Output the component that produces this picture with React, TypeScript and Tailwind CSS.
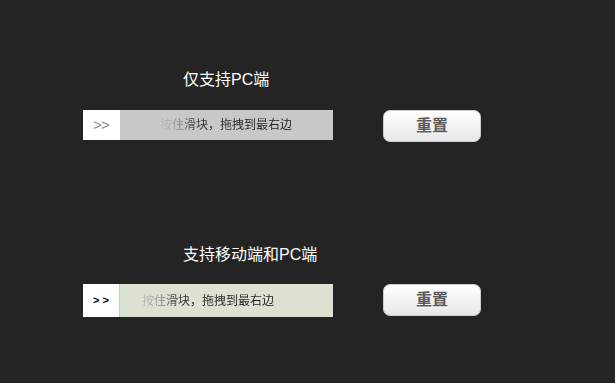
const font = { fontFamily: '"Liberation Sans", "Noto Sans CJK SC", sans-serif' };

function Slider({ bg, handle, textStart, height, border }: { bg: string; handle: React.ReactNode; textStart: string; height: string; border: string }) {
  return (
    <div className={`flex w-[250px] ${height} ${bg}`}>
      <div className={`flex w-[37px] items-center justify-center border-r bg-white ${border}`}>{handle}</div>
      <div className={`flex flex-1 items-center ${textStart}`}>
        <span
          className="bg-clip-text text-[12px] text-transparent"
          style={{ backgroundImage: 'linear-gradient(90deg, #bdbdbd 0px, #a8a8a8 12px, #555 30px, #2a2a2a 44px, #222 100%)' }}
        >
          按住滑块，拖拽到最右边
        </span>
      </div>
    </div>
  );
}

function ResetButton() {
  return (
    <button className="flex h-[32px] w-[98px] items-center justify-center rounded-[7px] border border-[#cfcfcf] bg-gradient-to-b from-white to-[#e6e6e6] text-[16px] font-bold text-[#5a5a5a] [text-shadow:0_1px_0_#fff]">
      重置
    </button>
  );
}

export default function App() {
  return (
    <div className="h-[383px] w-[615px] bg-[#242424] pl-[83px] pt-[68px]" style={font}>
      <div className="pl-[100px] text-[16px] leading-[24px] text-white">仅支持PC端</div>
      <div className="mt-[18px] flex items-start gap-[50px]">
        <Slider
          bg="bg-[#c8c8c6]"
          height="h-[30px]"
          textStart="pl-[40px]"
          border="border-white"
          handle={<span className="text-[15px] tracking-[-1px] text-[#8a8a8a]">&gt;&gt;</span>}
        />
        <ResetButton />
      </div>
      <div className="mt-[101px] pl-[100px] text-[16px] leading-[24px] text-white">支持移动端和PC端</div>
      <div className="mt-[17px] flex items-start gap-[50px]">
        <Slider
          bg="bg-[#dbe2d1]"
          height="h-[33px]"
          textStart="pl-[22px]"
          border="border-[#c8c8c8]"
          handle={<span className="text-[11px] font-bold text-black">&gt; &gt;</span>}
        />
        <ResetButton />
      </div>
    </div>
  );
}
